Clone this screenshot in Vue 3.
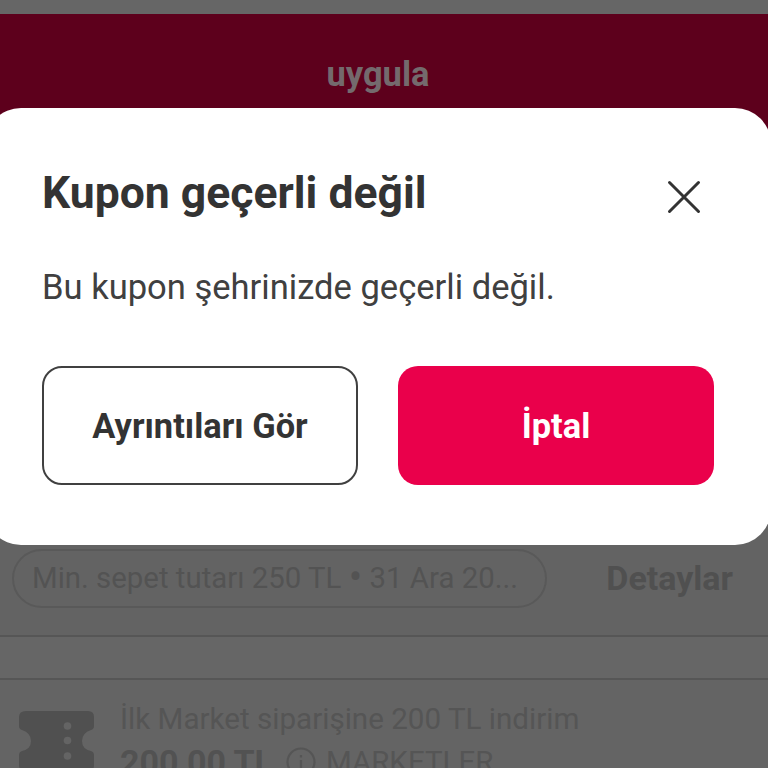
<script setup>
const coupon = { minimum: 'Min. sepet tutarı 250 TL', date: '31 Ara 20...', action: 'Detaylar' }
const next = { title: 'İlk Market siparişine 200 TL indirim', amount: '200,00 TL', category: 'MARKETLER' }
</script>

<template>
  <main class="screen">
    <div class="page">
      <header class="apply">uygula</header>
      <section class="coupon">
        <span class="terms">{{ coupon.minimum }} <span class="bullet">•</span> {{ coupon.date }}</span>
        <strong class="details">{{ coupon.action }}</strong>
      </section>
      <section class="coupon-next">
        <svg class="ticket" width="76" height="60" viewBox="0 0 76 60">
          <path d="M7 0H69Q75 0 75 6V15Q75 18 72 19Q63 22 63 30Q63 38 72 40Q75 41 75 44V54Q75 60 69 60H7Q0 60 0 54V44Q0 41 3 40Q12 38 12 30Q12 22 3 19Q0 18 0 15V6Q0 0 7 0Z" fill="#505050" />
          <g fill="#646464"><circle cx="48.500" cy="15" r="3.800" /><circle cx="48.500" cy="29.500" r="3.800" /><circle cx="48.500" cy="45" r="3.800" /></g>
        </svg>
        <div class="info">
          <div class="name">{{ next.title }}</div>
          <div class="row">
            <strong class="amount">{{ next.amount }}</strong>
            <svg class="info-icon" width="32" height="32" viewBox="0 0 32 32" fill="none" stroke="#555" stroke-width="2.200">
              <circle cx="16" cy="16" r="13.500" /><path d="M16 14V23M16 9V11.500" />
            </svg>
            <span class="category">{{ next.category }}</span>
          </div>
        </div>
      </section>
    </div>

    <div class="dialog" role="dialog">
      <div class="head">
        <h1>Kupon geçerli değil</h1>
        <button class="close" aria-label="Kapat">
          <svg width="34" height="34" viewBox="0 0 34 34" fill="none" stroke="#333" stroke-width="3" stroke-linecap="round">
            <path d="M2.500 2.500L31.500 31.500M31.500 2.500L2.500 31.500" />
          </svg>
        </button>
      </div>
      <p>Bu kupon şehrinizde geçerli değil.</p>
      <div class="actions">
        <button class="btn outline">Ayrıntıları Gör</button>
        <button class="btn primary">İptal</button>
      </div>
    </div>
  </main>
</template>

<style>
body { margin: 0; overflow: hidden; }
</style>

<style scoped>
* { box-sizing: border-box; }
.screen { position: relative; width: 768px; height: 768px; overflow: hidden; font-family: Roboto, "Liberation Sans", sans-serif; }
.page { height: 768px; padding-top: 14px; background: #666; color: #525252; overflow: hidden; }
.apply { height: 300px; padding: 38px 12px 0 0; text-align: center; background: #5d001c; color: #746a6d; font-size: 34.500px; line-height: 44px; font-weight: 700; }
.coupon { height: 323px; padding: 235px 35px 0 12px; display: flex; align-items: flex-start; justify-content: space-between; background: #636363; border-bottom: 2px solid #565656; }
.terms { width: 535px; height: 59px; padding-left: 18px; border: 2px solid #595959; border-radius: 30px; font-size: 29.400px; line-height: 55px; white-space: nowrap; color: #535353; }
.bullet { font-size: 40px; line-height: 1px; vertical-align: -3px; }
.details { font-size: 34px; line-height: 59px; color: #505050; }
.coupon-next { height: 140px; margin-top: 41px; padding: 0 19px; display: flex; gap: 25px; border-top: 2px solid #565656; background: #646464; }
.ticket { flex: none; margin-top: 31px; }
.info { padding-top: 21px; white-space: nowrap; }
.name { font-size: 29.600px; line-height: 36px; color: #555; }
.row { display: flex; align-items: center; height: 46px; margin-top: 2px; }
.amount { font-size: 34px; color: #525252; }
.info-icon { margin: 0 9px 0 12px; }
.category { font-size: 29.500px; color: #555; }
.dialog { position: absolute; left: -15px; top: 108px; width: 786px; height: 437px; padding: 57px; background: #fff; color: #333; border-radius: 36px; }
.head { display: flex; justify-content: space-between; height: 90px; padding-right: 13px; }
h1 { margin: 0; font-size: 44.500px; line-height: 57px; font-weight: 700; }
.close { width: 34px; height: 34px; margin-top: 15px; padding: 0; border: 0; background: none; }
.close svg { display: block; }
p { margin: 9px 0 0; font-size: 34.550px; line-height: 46px; color: #404040; }
.actions { display: grid; grid-template-columns: 1fr 1fr; gap: 40px; margin-top: 56px; }
.btn { height: 119px; padding: 2px 0 0; border: 0; border-radius: 20px; font: 700 34.400px/1 Roboto, "Liberation Sans", sans-serif; }
.outline { border: 2px solid #404040; background: #fff; color: #333; }
.primary { background: #ea004b; color: #fff; }
</style>
